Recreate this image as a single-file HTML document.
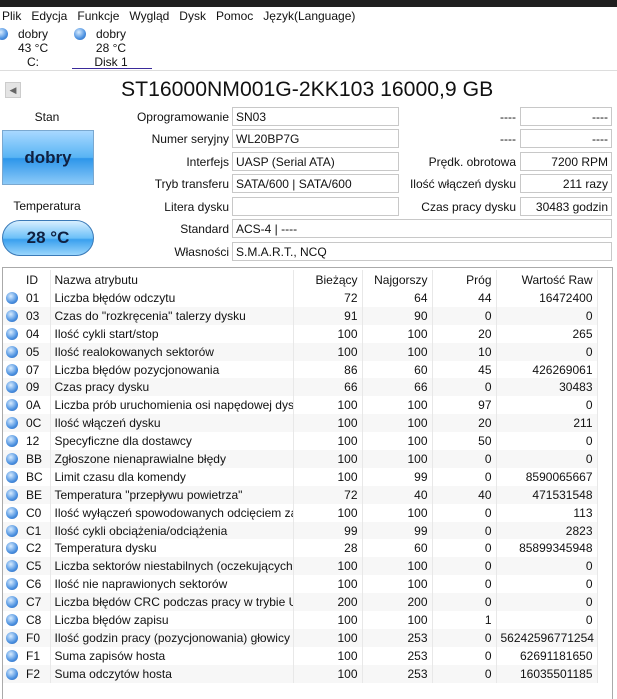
<!DOCTYPE html><html><head><meta charset="utf-8"><style>
body{margin:0;width:617px;height:699px;overflow:hidden;background:#fff;font-family:"Liberation Sans",sans-serif;font-size:12px;color:#111;position:relative}
.a{position:absolute;white-space:nowrap}
.lbl{position:absolute;text-align:right;white-space:nowrap}
.box{position:absolute;border:1px solid #c8c8c8;height:19px;line-height:19px;padding:0 3px;box-sizing:border-box;white-space:nowrap;overflow:hidden}
.dot{position:absolute;width:12px;height:12px;border-radius:50%;background:radial-gradient(circle at 40% 35%,#d8ecff,#4a90e0 60%,#2a60b0)}
table{border-collapse:collapse;position:absolute;left:3px;top:270px;font-size:12px;table-layout:fixed;width:594px}
td{height:17.9px;padding:0 4px;border-right:1px solid #e8e8e8;white-space:nowrap;overflow:hidden;text-overflow:clip}
tr:nth-child(even) td{background:#f7f7f7}
td.r{text-align:right}
</style></head><body>
<div class="a" style="left:0;top:0;width:617px;height:7px;background:#1f1f1f"></div>
<div class="a" style="left:2px;top:9px">Plik&nbsp;&nbsp;&nbsp;Edycja&nbsp;&nbsp;&nbsp;Funkcje&nbsp;&nbsp;&nbsp;Wygląd&nbsp;&nbsp;&nbsp;Dysk&nbsp;&nbsp;&nbsp;Pomoc&nbsp;&nbsp;&nbsp;Język(Language)</div>
<div class="dot" style="left:-4px;top:28px"></div>
<div class="a" style="left:18px;top:27px;width:30px;text-align:center;line-height:14px">dobry<br>43 °C<br>C:</div>
<div class="dot" style="left:74px;top:28px"></div>
<div class="a" style="left:92px;top:27px;width:38px;text-align:center;line-height:14px">dobry<br>28 °C<br>Disk 1</div>
<div class="a" style="left:72px;top:68px;width:80px;height:1px;background:#3a2a9a"></div>
<div class="a" style="left:0;top:70px;width:617px;height:1px;background:#ddd"></div>
<div class="a" style="left:5px;top:82px;width:16px;height:16px;background:#e4e4e4;border:1px solid #ccc;box-sizing:border-box;font-size:9px;color:#666;text-align:center;line-height:14px">◀</div>
<div class="a" style="left:121px;top:78px;font-size:21.2px;color:#111">ST16000NM001G-2KK103 16000,9 GB</div>
<div class="a" style="left:0;top:110px;width:94px;text-align:center">Stan</div>
<div class="a" style="left:2px;top:130px;width:92px;height:55px;background:linear-gradient(#a8d8ff,#58b4f4 50%,#2d96ea 52%,#8ccaf8);border:1px solid #7aa8d0;box-sizing:border-box;text-align:center;line-height:53px;font-weight:bold;font-size:17px;color:#102040">dobry</div>
<div class="a" style="left:0;top:199px;width:94px;text-align:center">Temperatura</div>
<div class="a" style="left:2px;top:220px;width:92px;height:36px;border-radius:18px;background:linear-gradient(#d8efff,#6cc0f8 50%,#3aa0ee 55%,#9ad6fc);border:1px solid #3a7ab8;box-sizing:border-box;text-align:center;line-height:34px;font-weight:bold;font-size:17px;color:#102040">28 °C</div>
<div class="lbl" style="right:388px;top:110px">Oprogramowanie</div><div class="box" style="left:232px;top:107px;width:167px">SN03</div>
<div class="lbl" style="right:388px;top:132px">Numer seryjny</div><div class="box" style="left:232px;top:129px;width:167px">WL20BP7G</div>
<div class="lbl" style="right:388px;top:155px">Interfejs</div><div class="box" style="left:232px;top:152px;width:167px">UASP (Serial ATA)</div>
<div class="lbl" style="right:388px;top:177px">Tryb transferu</div><div class="box" style="left:232px;top:174px;width:167px">SATA/600 | SATA/600</div>
<div class="lbl" style="right:388px;top:200px">Litera dysku</div><div class="box" style="left:232px;top:197px;width:167px"></div>
<div class="lbl" style="right:388px;top:222px">Standard</div><div class="box" style="left:232px;top:219px;width:380px">ACS-4 | ----</div>
<div class="lbl" style="right:388px;top:245px">Własności</div><div class="box" style="left:232px;top:242px;width:380px">S.M.A.R.T., NCQ</div>
<div class="lbl" style="right:101px;top:110px">----</div><div class="box" style="left:520px;top:107px;width:92px;text-align:right">----</div>
<div class="lbl" style="right:101px;top:132px">----</div><div class="box" style="left:520px;top:129px;width:92px;text-align:right">----</div>
<div class="lbl" style="right:101px;top:155px">Prędk. obrotowa</div><div class="box" style="left:520px;top:152px;width:92px;text-align:right">7200 RPM</div>
<div class="lbl" style="right:101px;top:177px">Ilość włączeń dysku</div><div class="box" style="left:520px;top:174px;width:92px;text-align:right">211 razy</div>
<div class="lbl" style="right:101px;top:200px">Czas pracy dysku</div><div class="box" style="left:520px;top:197px;width:92px;text-align:right">30483 godzin</div>
<div class="a" style="left:2px;top:267px;width:611px;height:432px;border:1px solid #aaa;border-bottom:none;box-sizing:border-box"></div>
<table>
<colgroup><col style="width:19px"><col style="width:28px"><col style="width:243px"><col style="width:69px"><col style="width:70px"><col style="width:64px"><col style="width:101px"></colgroup>
<tr style="height:19px"><td style="border-right:none"></td><td>ID</td><td>Nazwa atrybutu</td><td class="r">Bieżący</td><td class="r">Najgorszy</td><td class="r">Próg</td><td class="r">Wartość Raw</td></tr>
</table>
<script>
var d=[["01","Liczba błędów odczytu",72,64,44,"16472400"],["03","Czas do \"rozkręcenia\" talerzy dysku",91,90,0,"0"],["04","Ilość cykli start/stop",100,100,20,"265"],["05","Ilość realokowanych sektorów",100,100,10,"0"],["07","Liczba błędów pozycjonowania",86,60,45,"426269061"],["09","Czas pracy dysku",66,66,0,"30483"],["0A","Liczba prób uruchomienia osi napędowej dys...",100,100,97,"0"],["0C","Ilość włączeń dysku",100,100,20,"211"],["12","Specyficzne dla dostawcy",100,100,50,"0"],["BB","Zgłoszone nienaprawialne błędy",100,100,0,"0"],["BC","Limit czasu dla komendy",100,99,0,"8590065667"],["BE","Temperatura \"przepływu powietrza\"",72,40,40,"471531548"],["C0","Ilość wyłączeń spowodowanych odcięciem za...",100,100,0,"113"],["C1","Ilość cykli obciążenia/odciążenia",99,99,0,"2823"],["C2","Temperatura dysku",28,60,0,"85899345948"],["C5","Liczba sektorów niestabilnych (oczekujących ...",100,100,0,"0"],["C6","Ilość nie naprawionych sektorów",100,100,0,"0"],["C7","Liczba błędów CRC podczas pracy w trybie Ul...",200,200,0,"0"],["C8","Liczba błędów zapisu",100,100,1,"0"],["F0","Ilość godzin pracy (pozycjonowania) głowicy",100,253,0,"56242596771254"],["F1","Suma zapisów hosta",100,253,0,"62691181650"],["F2","Suma odczytów hosta",100,253,0,"16035501185"]];
var t=document.querySelector('table'),h='';
d.forEach(function(r){h+='<tr><td style="border-right:none;padding:0"><div style="width:12px;height:12px;border-radius:50%;margin-left:3px;background:radial-gradient(circle at 40% 35%,#d8ecff,#4a90e0 60%,#2a60b0)"></div></td><td>'+r[0]+'</td><td>'+r[1].replace(/"/g,'&quot;')+'</td><td class="r">'+r[2]+'</td><td class="r">'+r[3]+'</td><td class="r">'+r[4]+'</td><td class="r">'+r[5]+'</td></tr>';});
t.insertAdjacentHTML('beforeend',h);
</script>
</body></html>
